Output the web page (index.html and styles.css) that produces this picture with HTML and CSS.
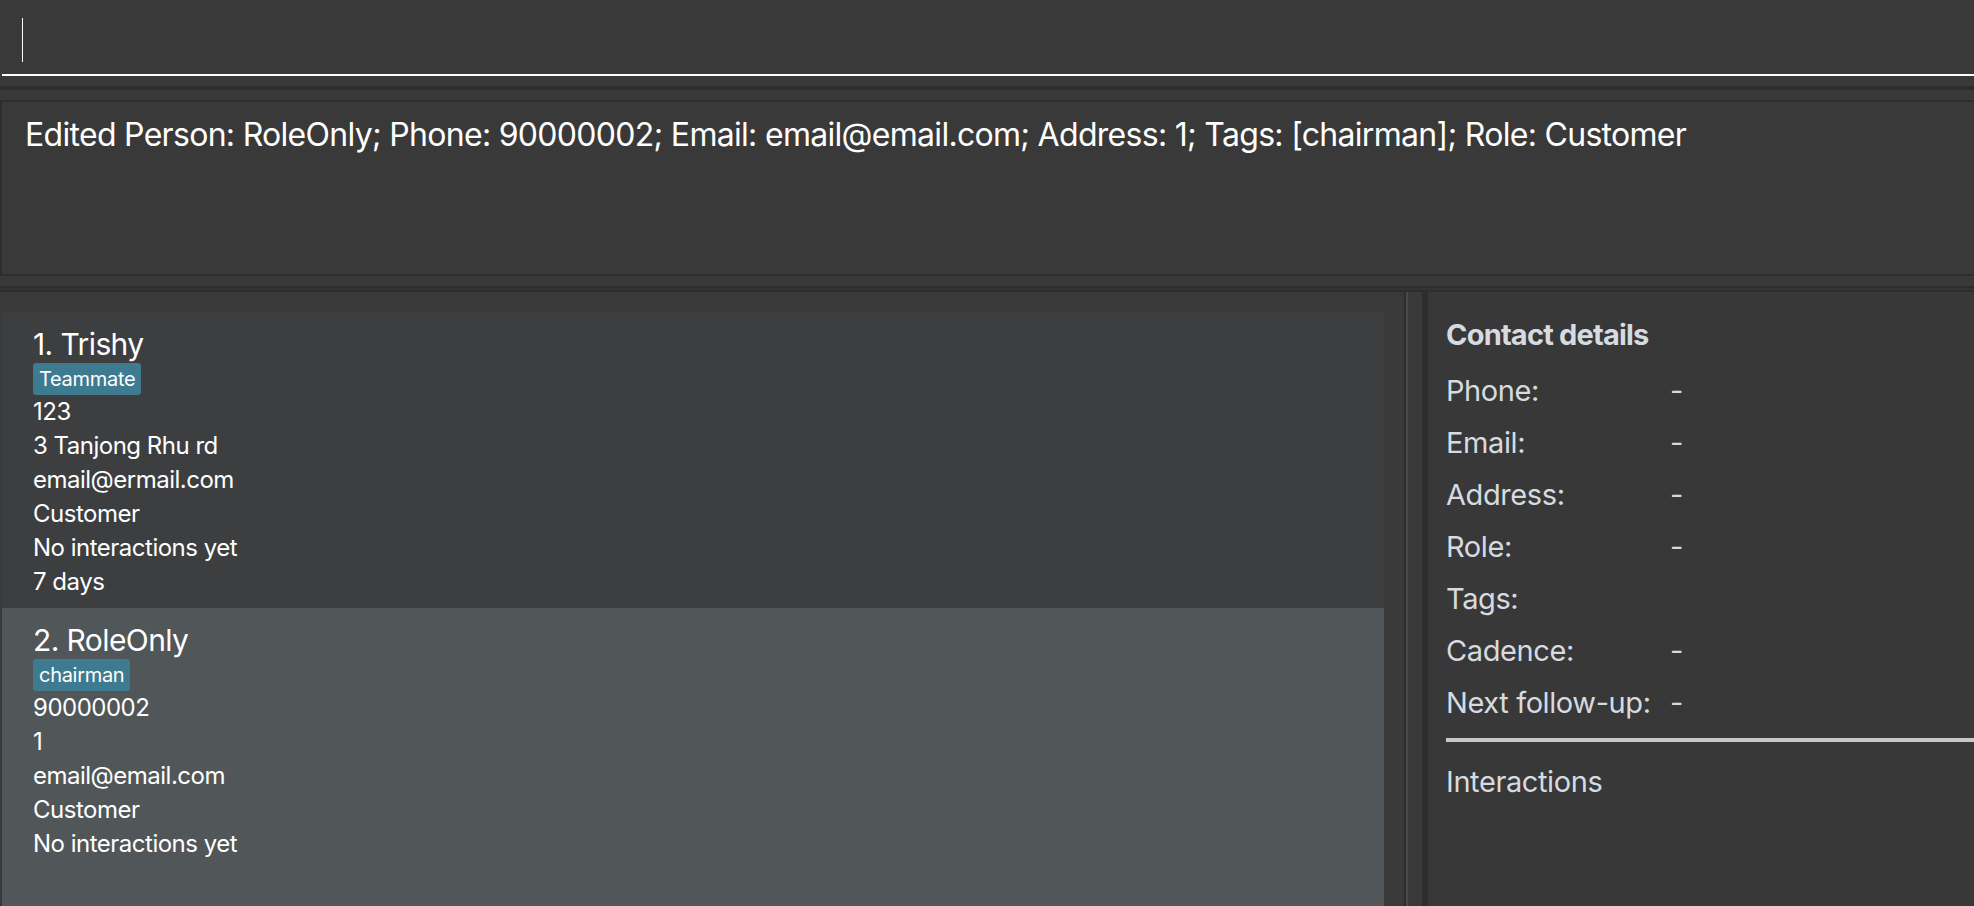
FILE: index.html
```html
<!DOCTYPE html>
<html>
<head>
<meta charset="utf-8">
<link rel="stylesheet" href="styles.css">
</head>
<body>
<div class="app">
  <div class="command">
    <div class="command-input"><span class="caret"></span></div>
  </div>
  <div class="band"></div>
  <div class="result-wrap">
    <div class="result">Edited Person: RoleOnly; Phone: 90000002; Email: email@email.com; Address: 1; Tags: [chairman]; Role: Customer</div>
  </div>
  <div class="split-band"></div>
  <div class="main">
    <div class="list-panel">
      <div class="list">
        <div class="card">
          <div class="name">1. Trishy</div>
          <div class="tags"><span class="tag">Teammate</span></div>
          <div class="line">123</div>
          <div class="line">3 Tanjong Rhu rd</div>
          <div class="line">email@ermail.com</div>
          <div class="line">Customer</div>
          <div class="line">No interactions yet</div>
          <div class="line">7 days</div>
        </div>
        <div class="card selected">
          <div class="name">2. RoleOnly</div>
          <div class="tags"><span class="tag">chairman</span></div>
          <div class="line">90000002</div>
          <div class="line">1</div>
          <div class="line">email@email.com</div>
          <div class="line">Customer</div>
          <div class="line">No interactions yet</div>
        </div>
      </div>
    </div>
    <div class="divider"></div>
    <div class="details">
      <div class="details-title">Contact details</div>
      <div class="detail-grid">
        <div class="label">Phone:</div><div class="value">-</div>
        <div class="label">Email:</div><div class="value">-</div>
        <div class="label">Address:</div><div class="value">-</div>
        <div class="label">Role:</div><div class="value">-</div>
        <div class="label">Tags:</div><div class="value"></div>
        <div class="label">Cadence:</div><div class="value">-</div>
        <div class="label">Next follow-up:</div><div class="value">-</div>
      </div>
      <div class="sep"></div>
      <div class="interactions">Interactions</div>
    </div>
  </div>
</div>
</body>
</html>
```

FILE: styles.css
```css
* { box-sizing: border-box; }
html, body {
  margin: 0;
  padding: 0;
  width: 1974px;
  height: 906px;
  overflow: hidden;
  background: #393939;
  font-family: "Inter", "Noto Sans", sans-serif;
  color: #ffffff;
}
.app {
  display: flex;
  flex-direction: column;
  height: 906px;
}
.command {
  height: 76px;
  padding-left: 2px;
}
.command-input {
  height: 76px;
  border-bottom: 2px solid #ffffff;
  padding: 18px 0 0 20px;
}
.caret {
  display: block;
  width: 1px;
  height: 44px;
  background: #ffffff;
}
.band {
  margin-top: 10px;
  height: 4px;
  background: #2d2d2d;
}
.result-wrap {
  margin-top: 10px;
  height: 176px;
}
.result {
  height: 176px;
  border: 2px solid #2e2e2e;
  border-right: none;
  background: #393939;
  padding: 13px 0 0 23px;
  font-size: 32px;
  letter-spacing: -0.7px;
  line-height: 40px;
  white-space: nowrap;
}
.split-band {
  margin-top: 10px;
  height: 6px;
  border-top: 2px solid #2d2d2d;
  border-bottom: 2px solid #2d2d2d;
  background: #343434;
}
.main {
  flex: 1;
  display: flex;
  min-height: 0;
}
.list-panel {
  width: 1404px;
  padding: 20px 20px 0 2px;
  background: #393939;
}
.list {
  display: flex;
  flex-direction: column;
}
.card {
  background: #3c3e40;
  padding: 13px 0 0 31px;
  height: 296px;
}
.card.selected {
  background: #515658;
  height: 300px;
  padding-top: 13px;
}
.name {
  font-size: 30px;
  letter-spacing: -0.6px;
  line-height: 38px;
}
.tags {
  display: flex;
  height: 32px;
}
.tag {
  background: #3e7b91;
  border-radius: 3px;
  font-size: 20px;
  letter-spacing: -0.3px;
  height: 32px;
  line-height: 32px;
  padding: 0 6px;
}
.line {
  font-size: 24px;
  letter-spacing: -0.5px;
  line-height: 34px;
}
.divider {
  width: 20px;
  border-left: 2px solid #2d2d2d;
  border-right: 2px solid #2d2d2d;
  background: #393939;
  box-shadow: inset 2px 0 0 #4a4a4a;
}
.details {
  flex: 1;
  border-left: 4px solid #2d2d2d;
  background: #383838;
  padding: 23px 0 0 18px;
  color: #d6dbe0;
}
.details-title {
  font-size: 29px;
  font-weight: 700;
  letter-spacing: -0.8px;
  line-height: 40px;
}
.detail-grid {
  display: grid;
  grid-template-columns: 224px 1fr;
  grid-auto-rows: 52px;
  margin-top: 9px;
  font-size: 29px;
  letter-spacing: -0.4px;
  align-items: center;
}
.sep {
  margin-top: 10px;
  height: 4px;
  background: #c8c8c8;
}
.interactions {
  margin-top: 20px;
  font-size: 29px;
  letter-spacing: -0.4px;
  line-height: 40px;
}
```
